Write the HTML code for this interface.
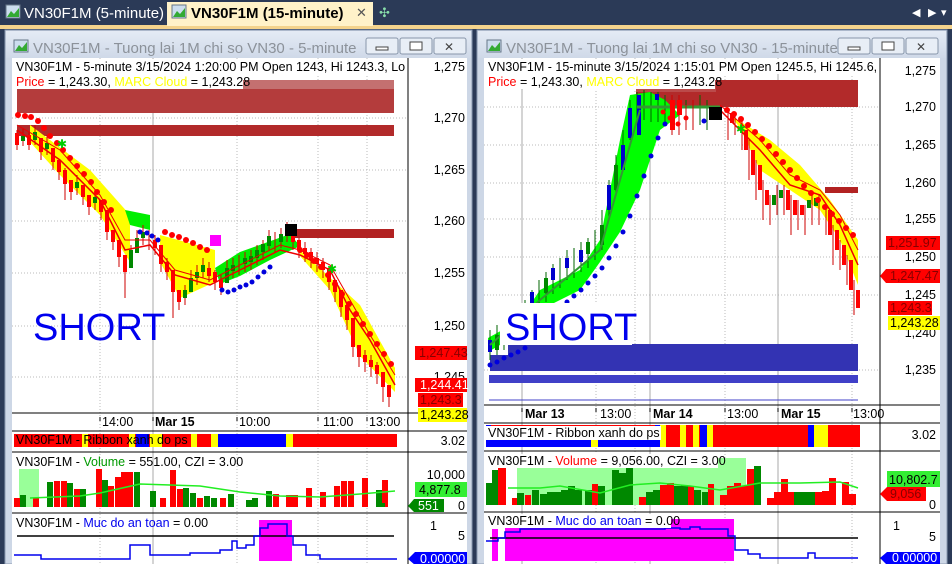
<!DOCTYPE html>
<html><head><meta charset="utf-8"><style>
body{margin:0;width:952px;height:564px;overflow:hidden;background:#2b3a57;font-family:"Liberation Sans",sans-serif}
svg{position:absolute;left:0;top:0}
</style></head><body>
<svg width="952" height="564" viewBox="0 0 952 564" font-family="Liberation Sans, sans-serif">
<defs>
<clipPath id="cl"><rect x="12" y="58" width="396" height="506"/></clipPath>
<clipPath id="cr"><rect x="484" y="58" width="396" height="506"/></clipPath>
<linearGradient id="tb" x1="0" y1="0" x2="0" y2="1"><stop offset="0" stop-color="#e4ebf5"/><stop offset="1" stop-color="#cfd9e8"/></linearGradient>
</defs>
<!-- tab bar -->
<rect x="0" y="0" width="952" height="26" fill="#2b3a57"/>
<rect x="0" y="25" width="952" height="4" fill="#f4d38c"/>
<rect x="167" y="2" width="206" height="24" fill="#fff2c9"/>
<rect x="6" y="5" width="14" height="13" fill="#cde" stroke="#678"/><path d="M7 17 L11 11 L14 14 L19 8 L19 17Z" fill="#3a3"/>
<text x="24" y="18" font-size="15" fill="#fff">VN30F1M (5-minute)</text>
<rect x="172" y="5" width="14" height="13" fill="#cde" stroke="#678"/><path d="M173 17 L177 11 L180 14 L185 8 L185 17Z" fill="#3a3"/>
<text x="191" y="18" font-size="15" font-weight="bold" fill="#000">VN30F1M (15-minute)</text>
<text x="356" y="17" font-size="13" fill="#555">✕</text>
<text x="379" y="17" font-size="13" fill="#8da">✣</text>
<text x="912" y="16" font-size="11" fill="#fff">◀</text><text x="928" y="16" font-size="11" fill="#fff">▶</text><text x="941" y="16" font-size="11" fill="#fff">▾</text>

<!-- LEFT WINDOW -->
<rect x="5" y="30" width="467" height="534" fill="#cdd7e6" stroke="#8a99b0"/>
<rect x="6" y="31" width="465" height="27" fill="url(#tb)"/>
<rect x="14" y="40" width="14" height="12" fill="#cde" stroke="#678"/><path d="M15 51 L19 45 L22 48 L27 42 L27 51Z" fill="#3a3"/>
<text x="33" y="53" font-size="15" fill="#8c929a">VN30F1M - Tuong lai 1M chi so VN30 - 5-minute</text>
<rect x="366" y="38" width="32" height="16" rx="2" fill="#e8eef6" stroke="#8896aa"/><rect x="376" y="47" width="12" height="3" fill="#fff" stroke="#444"/>
<rect x="400" y="38" width="32" height="16" rx="2" fill="#e8eef6" stroke="#8896aa"/><rect x="410" y="42" width="12" height="8" fill="#fff" stroke="#444"/>
<rect x="434" y="38" width="32" height="16" rx="2" fill="#e8eef6" stroke="#8896aa"/><text x="444" y="51" font-size="12" fill="#444">✕</text>
<rect x="12" y="58" width="455" height="506" fill="#fff"/>
<g clip-path="url(#cl)">
<!-- grid -->
<g stroke="#bbb" stroke-dasharray="1,2">
<line x1="12" y1="118" x2="408" y2="118"/><line x1="12" y1="170" x2="408" y2="170"/><line x1="12" y1="221" x2="408" y2="221"/><line x1="12" y1="273" x2="408" y2="273"/><line x1="12" y1="326" x2="408" y2="326"/><line x1="12" y1="377" x2="408" y2="377"/>
<line x1="100" y1="58" x2="100" y2="564"/><line x1="237" y1="58" x2="237" y2="564"/><line x1="318" y1="58" x2="318" y2="564"/><line x1="367" y1="58" x2="367" y2="564"/>
</g>
<line x1="153" y1="58" x2="153" y2="564" stroke="#aaa"/>
<!-- bands -->
<rect x="17" y="80" width="377" height="12" fill="#c47070"/>
<rect x="17" y="89" width="377" height="24" fill="#b43c3c"/>
<rect x="17" y="125" width="377" height="11" fill="#b22a2a"/>
<rect x="295" y="229" width="99" height="9" fill="#b22222"/>
<!-- clouds -->
<polygon points="30,125 90,170 130,215 130,262 100,215 60,175 30,142" fill="#ff0"/>
<polygon points="160,235 215,250 215,282 180,298 160,262" fill="#ff0"/>
<polygon points="300,250 360,305 395,368 395,392 360,356 330,290 300,256" fill="#ff0"/>
<polygon points="215,268 240,252 290,234 300,246 270,260 240,276 220,284" fill="#0e0"/>
<polygon points="125,210 150,215 150,230 130,225" fill="#0e0"/>
<!-- candles -->
<g stroke-width="1">
<path d="M17 130v20M23 128v18M29 132v18M35 125v20M41 138v22M47 135v20M53 148v22M59 160v20M65 168v32M71 180v20M77 175v20M83 185v20M89 195v20M95 190v20M101 200v20M107 218v22M113 230v20M119 245v22M125 258v40M131 245v20M137 230v20M143 225v20M149 230v20M155 235v20M161 250v22M167 258v22M173 278v40M179 290v20M185 285v20M191 270v20M197 265v20M203 258v20M209 262v20M215 270v20M221 275v20M227 260v20M233 258v20M239 255v20M245 252v20M251 250v20M257 245v20M263 240v20M269 230v20M275 232v20M281 228v20M287 222v20M293 230v20M299 238v20M305 242v20M311 248v20M317 252v20M323 258v20M329 270v20M335 280v22M341 295v22M347 308v22M353 335v22M359 345v22M365 350v22M371 355v22M377 362v22M383 372v30M389 385v22" stroke="#c00"/>
</g>
<g fill="#f00">
<rect x="15" y="133" width="4" height="12"/><rect x="27" y="135" width="4" height="10"/><rect x="39" y="138" width="4" height="14"/><rect x="51" y="148" width="4" height="14"/><rect x="57" y="160" width="4" height="12"/><rect x="63" y="170" width="4" height="14"/><rect x="69" y="180" width="4" height="12"/><rect x="81" y="185" width="4" height="12"/><rect x="87" y="195" width="4" height="12"/><rect x="99" y="200" width="4" height="12"/><rect x="105" y="210" width="4" height="22"/><rect x="111" y="230" width="4" height="12"/><rect x="117" y="240" width="4" height="17"/><rect x="123" y="255" width="4" height="17"/><rect x="153" y="240" width="4" height="8"/><rect x="159" y="245" width="4" height="19"/><rect x="165" y="262" width="4" height="10"/><rect x="171" y="270" width="4" height="22"/><rect x="177" y="290" width="4" height="12"/><rect x="207" y="268" width="4" height="8"/><rect x="213" y="272" width="4" height="10"/><rect x="219" y="280" width="4" height="8"/><rect x="291" y="232" width="4" height="10"/><rect x="297" y="240" width="4" height="10"/><rect x="303" y="248" width="4" height="6"/><rect x="309" y="252" width="4" height="8"/><rect x="315" y="258" width="4" height="6"/><rect x="321" y="262" width="4" height="8"/><rect x="327" y="268" width="4" height="14"/><rect x="333" y="280" width="4" height="12"/><rect x="339" y="290" width="4" height="17"/><rect x="345" y="305" width="4" height="15"/><rect x="351" y="318" width="4" height="29"/><rect x="357" y="345" width="4" height="12"/><rect x="363" y="355" width="4" height="7"/><rect x="369" y="360" width="4" height="7"/><rect x="375" y="365" width="4" height="9"/><rect x="381" y="372" width="4" height="15"/><rect x="387" y="385" width="4" height="12"/>
</g>
<g fill="#080">
<rect x="21" y="136" width="4" height="5"/><rect x="33" y="132" width="4" height="8"/><rect x="45" y="143" width="4" height="6"/><rect x="75" y="182" width="4" height="6"/><rect x="93" y="197" width="4" height="6"/><rect x="129" y="250" width="4" height="18"/><rect x="135" y="238" width="4" height="15"/><rect x="141" y="232" width="4" height="6"/><rect x="183" y="290" width="4" height="8"/><rect x="189" y="278" width="4" height="14"/><rect x="195" y="272" width="4" height="6"/><rect x="201" y="265" width="4" height="7"/><rect x="225" y="268" width="4" height="15"/><rect x="231" y="265" width="4" height="6"/><rect x="243" y="258" width="4" height="6"/><rect x="249" y="256" width="4" height="6"/><rect x="255" y="250" width="4" height="8"/><rect x="261" y="244" width="4" height="8"/><rect x="267" y="236" width="4" height="10"/><rect x="279" y="234" width="4" height="8"/><rect x="285" y="228" width="4" height="8"/>
</g>
<polyline points="17,130 60,160 100,200 125,250 150,245 175,275 210,285 240,270 280,250 300,255 330,270 350,310 370,340 395,385" fill="none" stroke="#e00" stroke-width="1.5"/>
<polyline points="17,125 60,150 100,195 125,240 150,240 175,270 210,280 240,265 280,245 300,250 330,265 350,300 370,335 395,375" fill="none" stroke="#e00" stroke-width="1"/>
<g fill="#f00">
<circle cx="18" cy="115" r="3"/><circle cx="25" cy="116" r="3"/><circle cx="31" cy="117" r="3"/><circle cx="38" cy="121" r="3"/><circle cx="44" cy="128" r="3"/><circle cx="50" cy="136" r="3"/><circle cx="57" cy="143" r="3"/><circle cx="63" cy="150" r="3"/><circle cx="70" cy="158" r="3"/><circle cx="77" cy="166" r="3"/><circle cx="84" cy="174" r="3"/><circle cx="91" cy="182" r="3"/><circle cx="97" cy="192" r="3"/><circle cx="104" cy="202" r="3"/><circle cx="111" cy="210" r="3"/>
<circle cx="165" cy="232" r="3"/><circle cx="172" cy="235" r="3"/><circle cx="179" cy="237" r="3"/><circle cx="186" cy="240" r="3"/><circle cx="193" cy="243" r="3"/><circle cx="200" cy="247" r="3"/><circle cx="207" cy="250" r="3"/>
<circle cx="300" cy="250" r="3"/><circle cx="307" cy="255" r="3"/><circle cx="314" cy="261" r="3"/><circle cx="321" cy="267" r="3"/><circle cx="328" cy="275" r="3"/><circle cx="335" cy="284" r="3"/><circle cx="342" cy="294" r="3"/><circle cx="349" cy="304" r="3"/><circle cx="356" cy="314" r="3"/><circle cx="363" cy="324" r="3"/><circle cx="370" cy="334" r="3"/><circle cx="377" cy="344" r="3"/><circle cx="384" cy="354" r="3"/><circle cx="391" cy="364" r="3"/>
</g>
<g fill="#00d">
<circle cx="140" cy="232" r="2.5"/><circle cx="147" cy="233" r="2.5"/><circle cx="152" cy="236" r="2.5"/><circle cx="158" cy="240" r="2.5"/>
<circle cx="222" cy="290" r="2.5"/><circle cx="228" cy="292" r="2.5"/><circle cx="234" cy="290" r="2.5"/><circle cx="240" cy="287" r="2.5"/><circle cx="246" cy="285" r="2.5"/><circle cx="252" cy="282" r="2.5"/><circle cx="258" cy="277" r="2.5"/><circle cx="264" cy="272" r="2.5"/><circle cx="270" cy="267" r="2.5"/>
</g>
<rect x="210" y="235" width="11" height="11" fill="#f0f"/>
<rect x="285" y="224" width="12" height="12" fill="#000"/>
<text x="57" y="148" font-size="12" fill="#0c0">✱</text><text x="327" y="273" font-size="12" fill="#0c0">✱</text>
<text x="33" y="340" font-size="38" fill="#00e">SHORT</text>
<rect x="14" y="59" width="393" height="15" fill="#fff"/>
<text x="16" y="71" font-size="12.5" fill="#000">VN30F1M - 5-minute 3/15/2024 1:20:00 PM Open 1243, Hi 1243.3, Lo 1</text>
<rect x="14" y="74" width="229" height="15" fill="#fff"/>
<text x="16" y="86" font-size="12.5" fill="#000"><tspan fill="#f00">Price</tspan> = 1,243.30, <tspan fill="#ff0">MARC Cloud</tspan> = 1,243.28</text>
<!-- ribbon -->
<rect x="14" y="434" width="383" height="13" fill="#f00"/>
<rect x="82" y="434" width="6" height="13" fill="#ff0"/><rect x="129" y="434" width="6" height="13" fill="#ff0"/><rect x="136" y="434" width="13" height="13" fill="#00f"/><rect x="150" y="434" width="12" height="13" fill="#ff0"/>
<rect x="191" y="434" width="6" height="13" fill="#ff0"/><rect x="211" y="434" width="7" height="13" fill="#ff0"/><rect x="218" y="434" width="68" height="13" fill="#00f"/><rect x="286" y="434" width="7" height="13" fill="#ff0"/>
<text x="16" y="444" font-size="12.5" fill="#000">VN30F1M - Ribbon xanh do ps</text>
<!-- volume -->
<rect x="19" y="469" width="20" height="38" fill="#9f9"/>
<g fill="#f00">
<rect x="14" y="498" width="6" height="9"/><rect x="33" y="498" width="6" height="9"/><rect x="54" y="481" width="6" height="26"/><rect x="61" y="481" width="6" height="26"/><rect x="74" y="489" width="6" height="18"/><rect x="96" y="469" width="6" height="38"/><rect x="108" y="486" width="6" height="21"/><rect x="115" y="477" width="6" height="30"/><rect x="121" y="472" width="6" height="35"/><rect x="127" y="472" width="6" height="35"/><rect x="160" y="498" width="6" height="9"/><rect x="170" y="470" width="6" height="37"/><rect x="177" y="489" width="6" height="18"/><rect x="197" y="498" width="6" height="9"/><rect x="220" y="498" width="6" height="9"/><rect x="273" y="494" width="6" height="13"/><rect x="286" y="495" width="6" height="12"/><rect x="292" y="495" width="6" height="12"/><rect x="306" y="488" width="6" height="19"/><rect x="320" y="492" width="6" height="15"/><rect x="334" y="486" width="6" height="21"/><rect x="341" y="481" width="6" height="26"/><rect x="348" y="481" width="6" height="26"/><rect x="362" y="478" width="6" height="29"/><rect x="382" y="480" width="6" height="27"/>
</g>
<g fill="#080">
<rect x="20" y="495" width="6" height="12"/><rect x="47" y="482" width="6" height="25"/><rect x="67" y="483" width="6" height="24"/><rect x="80" y="489" width="6" height="18"/><rect x="102" y="480" width="6" height="27"/><rect x="134" y="472" width="6" height="35"/><rect x="150" y="491" width="6" height="16"/><rect x="183" y="488" width="6" height="19"/><rect x="190" y="493" width="6" height="14"/><rect x="204" y="496" width="6" height="11"/><rect x="211" y="498" width="6" height="9"/><rect x="228" y="494" width="6" height="13"/><rect x="246" y="500" width="6" height="7"/><rect x="252" y="498" width="6" height="9"/><rect x="266" y="491" width="6" height="16"/><rect x="379" y="503" width="6" height="4"/><rect x="376" y="490" width="6" height="17"/>
</g>
<polyline points="30,498 80,496 100,493 140,484 200,486 240,492 280,496 320,497 360,494 395,491" fill="none" stroke="#2e2" stroke-width="1.5"/>
<text x="16" y="466" font-size="12.5" fill="#000">VN30F1M - <tspan fill="#090">Volume</tspan> = 551.00, CZI = 3.00</text>
<!-- safety -->
<rect x="259" y="520" width="33" height="41" fill="#f0f"/>
<line x1="17" y1="536" x2="394" y2="536" stroke="#000" stroke-width="1.5"/>
<polyline points="14,555 41,555 41,559 130,559 130,545 150,545 150,555 190,555 190,553 220,553 220,550 232,550 232,541 237,541 237,548 246,548 246,545 254,545 254,536 260,536 260,528 268,528 268,524 287,524 287,536 293,536 293,545 306,545 306,555 320,555 320,559 397,559" fill="none" stroke="#00e" stroke-width="1.5"/>
<text x="16" y="527" font-size="12.5" fill="#000">VN30F1M - <tspan fill="#00e">Muc do an toan</tspan> = 0.00</text>
</g>
<!-- left separators & axis -->
<line x1="408" y1="58" x2="408" y2="564" stroke="#000"/>
<g stroke="#000"><line x1="12" y1="413" x2="467" y2="413"/><line x1="12" y1="431" x2="467" y2="431"/><line x1="12" y1="452" x2="467" y2="452"/><line x1="12" y1="513" x2="467" y2="513"/></g>
<g font-size="12.5" fill="#000" text-anchor="end">
<text x="465" y="71">1,275</text><text x="465" y="122">1,270</text><text x="465" y="174">1,265</text><text x="465" y="225">1,260</text><text x="465" y="277">1,255</text><text x="465" y="330">1,250</text><text x="465" y="381">1,245</text>
<text x="465" y="445">3.02</text><text x="465" y="479">10,000</text><text x="465" y="510">0</text><text x="437" y="530">1</text><text x="465" y="540">5</text>
</g>
<g font-size="12.5"><rect x="415" y="346" width="52" height="14" fill="#f00"/><text x="419" y="357" fill="#800">1,247.43</text>
<rect x="415" y="378" width="52" height="14" fill="#f00"/><text x="420" y="389" fill="#fff">1,244.41</text>
<rect x="418" y="393" width="45" height="14" fill="#f00"/><text x="420" y="404" fill="#800">1,243.3</text>
<rect x="418" y="408" width="49" height="14" fill="#ff0"/><text x="420" y="419" fill="#000">1,243.28</text>
<rect x="415" y="482" width="52" height="15" fill="#3e3"/><text x="419" y="494" fill="#000">4,877.8</text>
<polygon points="408,506 414,499 444,499 444,512 414,512" fill="#080"/><text x="418" y="510" fill="#fff">551</text>
<polygon points="408,559 415,552 467,552 467,565 415,565" fill="#00f"/><text x="420" y="563" fill="#fff">0.00000</text></g>
<g font-size="12.5" fill="#000"><text x="102" y="426">14:00</text><text x="155" y="426" font-weight="bold">Mar 15</text><text x="239" y="426">10:00</text><text x="323" y="426">11:00</text><text x="369" y="426">13:00</text>
<path d="M100 417v4M153 417v4M237 417v4M318 417v4M367 417v4" stroke="#000"/></g>

<!-- RIGHT WINDOW -->
<rect x="477" y="30" width="470" height="534" fill="#cdd7e6" stroke="#8a99b0"/>
<rect x="478" y="31" width="468" height="27" fill="url(#tb)"/>
<rect x="487" y="40" width="14" height="12" fill="#cde" stroke="#678"/><path d="M488 51 L492 45 L495 48 L500 42 L500 51Z" fill="#3a3"/>
<text x="506" y="53" font-size="15" fill="#8c929a">VN30F1M - Tuong lai 1M chi so VN30 - 15-minute</text>
<rect x="838" y="38" width="32" height="16" rx="2" fill="#e8eef6" stroke="#8896aa"/><rect x="848" y="47" width="12" height="3" fill="#fff" stroke="#444"/>
<rect x="872" y="38" width="32" height="16" rx="2" fill="#e8eef6" stroke="#8896aa"/><rect x="882" y="42" width="12" height="8" fill="#fff" stroke="#444"/>
<rect x="906" y="38" width="32" height="16" rx="2" fill="#e8eef6" stroke="#8896aa"/><text x="916" y="51" font-size="12" fill="#444">✕</text>
<rect x="484" y="58" width="456" height="506" fill="#fff"/>
<g clip-path="url(#cr)">
<g stroke="#bbb" stroke-dasharray="1,2">
<line x1="484" y1="107" x2="880" y2="107"/><line x1="484" y1="145" x2="880" y2="145"/><line x1="484" y1="183" x2="880" y2="183"/><line x1="484" y1="219" x2="880" y2="219"/><line x1="484" y1="257" x2="880" y2="257"/><line x1="484" y1="295" x2="880" y2="295"/><line x1="484" y1="370" x2="880" y2="370"/>
<line x1="596" y1="58" x2="596" y2="564"/><line x1="725" y1="58" x2="725" y2="564"/><line x1="852" y1="58" x2="852" y2="564"/><line x1="635" y1="58" x2="635" y2="564"/>
</g>
<g stroke="#aaa"><line x1="522" y1="58" x2="522" y2="564"/><line x1="650" y1="58" x2="650" y2="564"/><line x1="778" y1="58" x2="778" y2="564"/></g>
<rect x="636" y="80" width="222" height="27" fill="#b22a2a"/><rect x="636" y="80" width="80" height="12" fill="#bb4a4a"/>
<rect x="825" y="187" width="33" height="6" fill="#b22222"/>
<rect x="508" y="344" width="350" height="27" fill="#3333b3"/><rect x="490" y="355" width="20" height="16" fill="#3333b3"/>
<rect x="489" y="375" width="369" height="8" fill="#4040c8"/>
<line x1="489" y1="400" x2="858" y2="400" stroke="#4040c8"/>
<polygon points="488,338 520,320 540,290 580,270 600,240 610,190 620,140 630,95 650,92 665,100 680,115 660,130 640,190 620,232 600,262 580,290 540,310 500,345 488,352" fill="#0f0"/>
<polygon points="730,115 770,140 800,165 830,200 858,240 858,285 840,240 820,210 790,190 760,170 740,128" fill="#ff0"/>
<g stroke="#060"><path d="M490 330v30M497 325v30M504 320v30M511 315v30M518 310v30M525 300v30M532 290v30M539 280v30M546 272v30M553 264v30M560 258v30M567 250v30M574 248v30M581 242v30M588 238v30M595 230v30M602 210v40M609 180v40M616 155v40M623 130v40M630 100v40M637 92v30M644 90v30M651 92v30M658 92v30M665 95v30M686 100v30M693 100v30M700 95v30M707 100v30"/></g>
<g fill="#00c">
<rect x="488" y="340" width="4" height="12"/><rect x="502" y="330" width="4" height="12"/><rect x="530" y="292" width="4" height="14"/><rect x="551" y="268" width="4" height="12"/><rect x="565" y="258" width="4" height="10"/><rect x="579" y="250" width="4" height="12"/><rect x="607" y="185" width="4" height="25"/><rect x="621" y="145" width="4" height="25"/><rect x="628" y="108" width="4" height="30"/><rect x="637" y="95" width="4" height="40"/><rect x="655" y="94" width="4" height="6"/><rect x="714" y="106" width="5" height="10"/>
</g>
<g fill="#080">
<rect x="495" y="335" width="4" height="15"/><rect x="516" y="315" width="4" height="15"/><rect x="544" y="278" width="4" height="15"/><rect x="586" y="242" width="4" height="12"/><rect x="600" y="225" width="4" height="20"/><rect x="614" y="165" width="4" height="25"/>
</g>
<polyline points="637,107 720,107" stroke="#393" stroke-width="3"/>
<polyline points="490,345 540,300 600,250 620,180 640,110" fill="none" stroke="#393" stroke-width="2"/>
<g stroke="#c00"><path d="M672 95v40M679 95v40M686 105v25M693 100v30M672 95v40M728 110v30M735 115v20M742 120v30M749 140v40M756 160v40M763 180v40M770 195v30M777 185v30M784 185v30M791 195v40M798 200v30M805 205v30M812 195v30M819 195v30M826 205v30M833 225v40M840 240v30M847 255v30M854 280v35"/></g>
<g fill="#f00">
<rect x="670" y="100" width="5" height="30"/><rect x="677" y="100" width="5" height="15"/><rect x="730" y="113" width="4" height="10"/><rect x="744" y="130" width="4" height="20"/><rect x="751" y="150" width="4" height="25"/><rect x="758" y="165" width="4" height="25"/><rect x="765" y="190" width="4" height="15"/><rect x="786" y="190" width="4" height="20"/><rect x="793" y="200" width="4" height="15"/><rect x="800" y="205" width="4" height="10"/><rect x="828" y="210" width="4" height="25"/><rect x="835" y="230" width="4" height="20"/><rect x="842" y="245" width="4" height="20"/><rect x="849" y="260" width="4" height="30"/><rect x="856" y="290" width="4" height="18"/>
</g>
<g fill="#080"><rect x="772" y="195" width="4" height="10"/><rect x="779" y="190" width="4" height="8"/><rect x="807" y="200" width="4" height="8"/><rect x="814" y="198" width="4" height="8"/></g>
<polyline points="720,110 760,150 790,185 820,195 840,225 858,265" fill="none" stroke="#e00" stroke-width="1.5"/>
<polyline points="720,105 760,140 790,175 820,190 840,215 858,250" fill="none" stroke="#e00" stroke-width="1"/>
<g fill="#f00">
<circle cx="727" cy="110" r="3"/><circle cx="734" cy="114" r="3"/><circle cx="741" cy="119" r="3"/><circle cx="748" cy="125" r="3"/><circle cx="755" cy="132" r="3"/><circle cx="762" cy="139" r="3"/><circle cx="769" cy="146" r="3"/><circle cx="776" cy="154" r="3"/><circle cx="783" cy="162" r="3"/><circle cx="790" cy="170" r="3"/><circle cx="797" cy="178" r="3"/><circle cx="804" cy="186" r="3"/><circle cx="811" cy="193" r="3"/><circle cx="818" cy="200" r="3"/><circle cx="825" cy="207" r="3"/><circle cx="832" cy="214" r="3"/><circle cx="839" cy="221" r="3"/><circle cx="846" cy="228" r="3"/><circle cx="853" cy="235" r="3"/>
<circle cx="663" cy="112" r="2.5"/><circle cx="670" cy="118" r="2.5"/><circle cx="678" cy="124" r="2.5"/><circle cx="686" cy="118" r="2.5"/>
</g>
<g fill="#00d">
<circle cx="490" cy="365" r="2.5"/><circle cx="497" cy="362" r="2.5"/><circle cx="504" cy="358" r="2.5"/><circle cx="511" cy="355" r="2.5"/><circle cx="518" cy="352" r="2.5"/><circle cx="525" cy="348" r="2.5"/><circle cx="532" cy="340" r="2.5"/><circle cx="539" cy="332" r="2.5"/><circle cx="546" cy="325" r="2.5"/><circle cx="553" cy="318" r="2.5"/><circle cx="560" cy="310" r="2.5"/><circle cx="567" cy="302" r="2.5"/><circle cx="574" cy="296" r="2.5"/><circle cx="581" cy="290" r="2.5"/><circle cx="588" cy="283" r="2.5"/><circle cx="595" cy="276" r="2.5"/><circle cx="602" cy="268" r="2.5"/><circle cx="609" cy="258" r="2.5"/><circle cx="616" cy="246" r="2.5"/><circle cx="623" cy="232" r="2.5"/><circle cx="630" cy="216" r="2.5"/><circle cx="637" cy="196" r="2.5"/><circle cx="644" cy="176" r="2.5"/><circle cx="651" cy="156" r="2.5"/><circle cx="658" cy="138" r="2.5"/><circle cx="665" cy="124" r="2.5"/><circle cx="704" cy="121" r="2.5"/>
</g>
<rect x="709" y="107" width="13" height="13" fill="#000"/>
<text x="736" y="133" font-size="12" fill="#0c0">✱</text>
<rect x="500" y="303" width="132" height="42" fill="#fff"/>
<text x="505" y="340" font-size="38" fill="#00e">SHORT</text>
<rect x="486" y="59" width="394" height="15" fill="#fff"/>
<text x="488" y="71" font-size="12.5" fill="#000">VN30F1M - 15-minute 3/15/2024 1:15:01 PM Open 1245.5, Hi 1245.6, L</text>
<rect x="486" y="74" width="229" height="15" fill="#fff"/>
<text x="488" y="86" font-size="12.5" fill="#000"><tspan fill="#f00">Price</tspan> = 1,243.30, <tspan fill="#ff0">MARC Cloud</tspan> = 1,243.28</text>
<!-- ribbon -->
<rect x="486" y="425" width="374" height="22" fill="#f00"/>
<rect x="486" y="440" width="178" height="7" fill="#00f"/><rect x="486" y="425" width="5" height="22" fill="#00f"/>
<rect x="591" y="440" width="7" height="7" fill="#ff0"/>
<rect x="655" y="425" width="5" height="22" fill="#00f"/><rect x="660" y="425" width="6" height="22" fill="#ff0"/>
<rect x="680" y="425" width="6" height="22" fill="#ff0"/><rect x="693" y="425" width="6" height="22" fill="#ff0"/><rect x="700" y="425" width="7" height="22" fill="#00f"/><rect x="707" y="425" width="6" height="22" fill="#ff0"/>
<rect x="808" y="425" width="6" height="22" fill="#00f"/><rect x="814" y="425" width="14" height="22" fill="#ff0"/>
<rect x="486" y="426" width="175" height="14" fill="#fff"/>
<text x="488" y="437" font-size="12.5" fill="#000">VN30F1M - Ribbon xanh do ps</text>
<!-- volume -->
<rect x="517" y="458" width="229" height="47" fill="#9f9"/>
<g fill="#080"><rect x="486" y="483" width="6" height="22"/><rect x="492" y="470" width="6" height="35"/><rect x="517" y="493" width="7" height="12"/><rect x="532" y="490" width="7" height="15"/><rect x="540" y="494" width="7" height="11"/><rect x="547" y="492" width="7" height="13"/><rect x="554" y="492" width="7" height="13"/><rect x="561" y="490" width="7" height="15"/><rect x="568" y="486" width="7" height="19"/><rect x="575" y="490" width="7" height="15"/><rect x="585" y="490" width="7" height="15"/><rect x="598" y="486" width="7" height="19"/><rect x="612" y="470" width="7" height="35"/><rect x="619" y="473" width="7" height="32"/><rect x="626" y="468" width="7" height="37"/><rect x="646" y="492" width="7" height="13"/><rect x="653" y="490" width="7" height="15"/><rect x="674" y="486" width="7" height="19"/><rect x="681" y="485" width="7" height="20"/><rect x="694" y="490" width="7" height="15"/><rect x="702" y="492" width="7" height="13"/><rect x="754" y="466" width="7" height="39"/><rect x="794" y="492" width="7" height="13"/><rect x="801" y="492" width="7" height="13"/><rect x="808" y="492" width="7" height="13"/></g>
<g fill="#f00"><rect x="498" y="468" width="8" height="37"/><rect x="512" y="498" width="5" height="7"/><rect x="525" y="495" width="6" height="10"/><rect x="592" y="484" width="6" height="21"/><rect x="639" y="497" width="7" height="8"/><rect x="660" y="485" width="7" height="20"/><rect x="667" y="483" width="7" height="22"/><rect x="688" y="486" width="6" height="19"/><rect x="708" y="484" width="6" height="21"/><rect x="720" y="495" width="7" height="10"/><rect x="727" y="486" width="7" height="19"/><rect x="734" y="483" width="7" height="22"/><rect x="741" y="486" width="6" height="19"/><rect x="747" y="469" width="7" height="36"/><rect x="767" y="498" width="7" height="7"/><rect x="774" y="492" width="7" height="13"/><rect x="781" y="479" width="7" height="26"/><rect x="787" y="492" width="7" height="13"/><rect x="815" y="492" width="7" height="13"/><rect x="822" y="491" width="7" height="14"/><rect x="829" y="478" width="7" height="27"/><rect x="842" y="482" width="7" height="23"/><rect x="849" y="494" width="7" height="11"/></g>
<polyline points="508,488 540,488 560,486 600,493 630,485 660,483 690,486 720,490 760,483 800,483 840,482 858,488" fill="none" stroke="#2e2" stroke-width="1.5"/>
<rect x="486" y="454" width="232" height="14" fill="#fff"/>
<text x="488" y="465" font-size="12.5" fill="#000">VN30F1M - <tspan fill="#f00">Volume</tspan> = 9,056.00, CZI = 3.00</text>
<!-- safety -->
<rect x="492" y="529" width="6" height="32" fill="#f0f"/><rect x="505" y="519" width="229" height="42" fill="#f0f"/>
<line x1="490" y1="538" x2="858" y2="538" stroke="#000" stroke-width="1.5"/>
<polyline points="486,541 498,541 498,538 505,538 505,532 520,532 520,529 665,529 665,528 680,528 680,529 690,529 690,527 700,527 700,529 728,529 728,536 735,536 735,550 748,550 748,554 760,554 760,558 808,558 808,553 815,553 815,558 858,558" fill="none" stroke="#00e" stroke-width="1.5"/>
<rect x="486" y="514" width="185" height="14" fill="#fff"/>
<text x="488" y="525" font-size="12.5" fill="#000">VN30F1M - <tspan fill="#00e">Muc do an toan</tspan> = 0.00</text>
</g>
<line x1="880" y1="58" x2="880" y2="564" stroke="#000"/>
<g stroke="#000"><line x1="484" y1="405" x2="940" y2="405"/><line x1="484" y1="423" x2="940" y2="423"/><line x1="484" y1="451" x2="940" y2="451"/><line x1="484" y1="512" x2="940" y2="512"/></g>
<g font-size="12.5" fill="#000" text-anchor="end">
<text x="936" y="75">1,275</text><text x="936" y="111">1,270</text><text x="936" y="149">1,265</text><text x="936" y="187">1,260</text><text x="936" y="223">1,255</text><text x="936" y="261">1,250</text><text x="936" y="299">1,245</text><text x="936" y="337">1,240</text><text x="936" y="374">1,235</text>
<text x="936" y="439">3.02</text><text x="936" y="509">0</text><text x="900" y="530">1</text><text x="936" y="541">5</text>
</g>
<g font-size="12.5"><rect x="886" y="236" width="54" height="14" fill="#f00"/><text x="888" y="247" fill="#800">1,251.97</text>
<polygon points="880,276 886,269 940,269 940,283 886,283" fill="#f00"/><text x="890" y="280" fill="#800">1,247.47</text>
<rect x="888" y="301" width="44" height="14" fill="#f00"/><text x="890" y="312" fill="#800">1,243.3</text>
<rect x="888" y="316" width="52" height="14" fill="#ff0"/><text x="890" y="327" fill="#000">1,243.28</text>
<rect x="887" y="471" width="53" height="16" fill="#3e3"/><text x="889" y="484" fill="#000">10,802.7</text>
<polygon points="880,494 887,487 926,487 926,501 887,501" fill="#f00"/><text x="890" y="498" fill="#800">9,056</text>
<polygon points="880,558 887,552 940,552 940,565 887,565" fill="#00f"/><text x="892" y="562" fill="#fff">0.00000</text></g>
<g font-size="12.5" fill="#000"><text x="525" y="418" font-weight="bold">Mar 13</text><text x="600" y="418">13:00</text><text x="653" y="418" font-weight="bold">Mar 14</text><text x="727" y="418">13:00</text><text x="781" y="418" font-weight="bold">Mar 15</text><text x="853" y="418">13:00</text>
<path d="M522 408v4M596 408v4M650 408v4M725 408v4M778 408v4M852 408v4" stroke="#000"/></g>
</svg>
</body></html>
